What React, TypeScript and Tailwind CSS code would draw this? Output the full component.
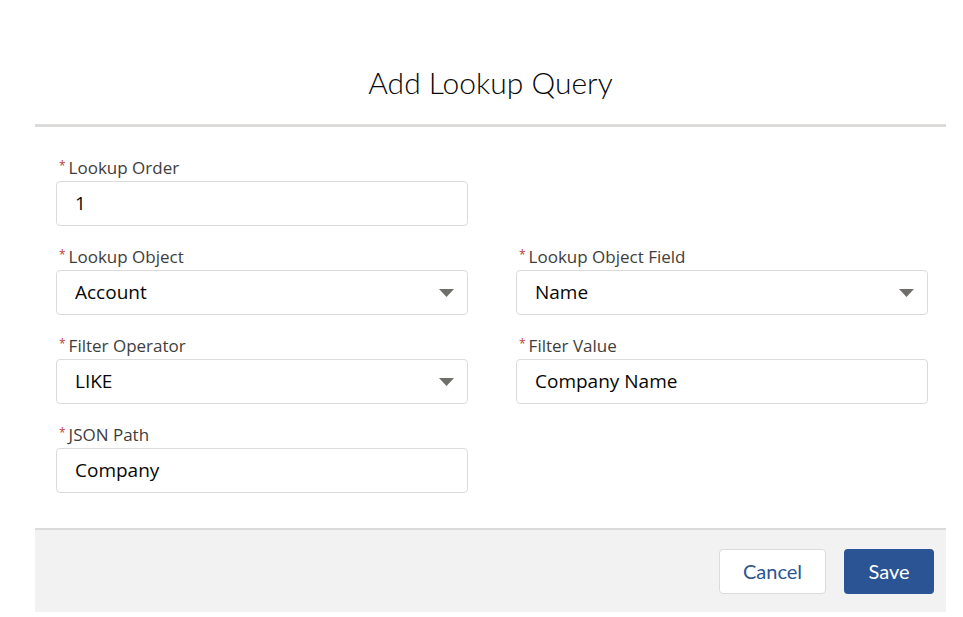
const font = "font-['Lato','Open_Sans',sans-serif]";
const body = "font-['Open_Sans','Lato',sans-serif]";

function Label({ text }: { text: string }) {
  return (
    <div className={`flex items-center h-[20px] mb-[4px] text-[17px] text-[#3e3e3c] leading-none ${body}`}>
      <span className="text-[#c23934] text-[12px] ml-[3px] mr-[3px] -mt-[2px]">*</span>
      <span>{text}</span>
    </div>
  );
}

function TextBox({ value }: { value: string }) {
  return (
    <div className={`h-[45px] border border-[#dddbda] rounded-[4px] bg-white flex items-center px-[18px] text-[19px] text-[#080707] ${body}`}>
      {value}
    </div>
  );
}

function Select({ value }: { value: string }) {
  return (
    <div className={`h-[45px] border border-[#dddbda] rounded-[4px] bg-white flex items-center justify-between pl-[18px] pr-[13px] text-[19px] text-[#080707] ${body}`}>
      <span>{value}</span>
      <svg width="15" height="10" viewBox="0 0 15 10">
        <path d="M0 1 L15 1 L7.5 9 Z" fill="#706e6b" />
      </svg>
    </div>
  );
}

function Field({ label, value, select }: { label: string; value: string; select?: boolean }) {
  return (
    <div>
      <Label text={label} />
      {select ? <Select value={value} /> : <TextBox value={value} />}
    </div>
  );
}

export default function App() {
  return (
    <div className={`w-[963px] h-[617px] bg-white ${font}`}>
      <div className="ml-[35px] w-[911px]">
        <div className="h-[127px] border-b-[3px] border-[#dddbda] flex justify-center pt-[62px]">
          <h2 className="text-[30px] font-light text-[#080707] leading-[40px]">Add Lookup Query</h2>
        </div>
        <div className="pt-[30px] pb-[35px] pl-[21px] pr-[18px] grid grid-cols-2 gap-x-[48px] gap-y-[20px]">
          <Field label="Lookup Order" value="1" />
          <div />
          <Field label="Lookup Object" value="Account" select />
          <Field label="Lookup Object Field" value="Name" select />
          <Field label="Filter Operator" value="LIKE" select />
          <Field label="Filter Value" value="Company Name" />
          <Field label="JSON Path" value="Company" />
        </div>
        <div className="h-[84px] bg-[#f3f2f2] border-t-[2px] border-[#dddbda] flex items-center justify-end gap-[18px] pr-[12px]">
          <button className="h-[45px] w-[107px] rounded-[4px] border border-[#dddbda] bg-white text-[#2b5494] text-[20px]">
            Cancel
          </button>
          <button className="h-[45px] w-[90px] rounded-[4px] bg-[#2b5494] text-white text-[20px]">
            Save
          </button>
        </div>
      </div>
    </div>
  );
}
